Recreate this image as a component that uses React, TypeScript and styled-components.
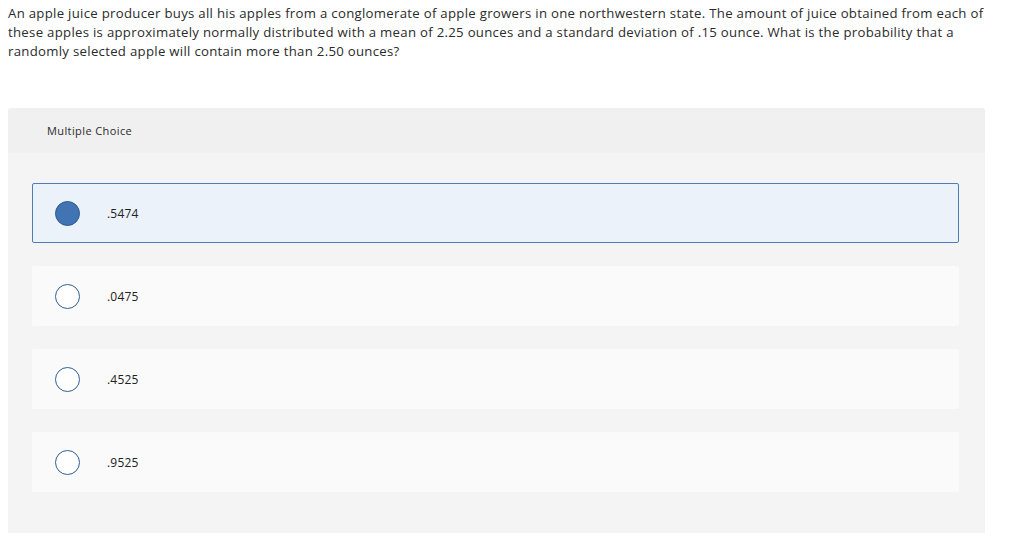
import React from "react";
import styled, { createGlobalStyle } from "styled-components";

const Global = createGlobalStyle`
  html, body { margin: 0; padding: 0; background: #ffffff; }
  body { padding: 3px 8px 8px; font-family: "Open Sans", Arial, sans-serif; color: #333333; }
`;

const Page = styled.main`
  width: 977px;
`;

const Question = styled.p`
  margin: 0;
  font-size: 13.2px;
  letter-spacing: 0.29px;
  line-height: 19px;
  color: #2b2b2b;
  padding-top: 1px;
`;

const Panel = styled.section`
  margin-top: 47px;
  background: #f4f4f4;
  border-radius: 3px 3px 0 0;
  padding-bottom: 41px;
`;

const PanelHeader = styled.div`
  height: 45px;
  display: flex;
  align-items: center;
  padding-left: 39px;
  background: #f0f0f0;
  border-radius: 3px 3px 0 0;
  font-size: 11px;
  letter-spacing: 0.4px;
  color: #2b2b2b;
`;

const Options = styled.div`
  display: flex;
  flex-direction: column;
  gap: 23px;
  padding: 30px 26px 0 24px;
`;

const Option = styled.label<{ $selected?: boolean }>`
  box-sizing: border-box;
  height: 60px;
  display: flex;
  align-items: center;
  padding-left: 22px;
  border-radius: 2px;
  background: ${(p) => (p.$selected ? "#ebf2fa" : "#fafafa")};
  border: 1px solid ${(p) => (p.$selected ? "#4b7dbb" : "#fafafa")};
`;

const Radio = styled.span<{ $selected?: boolean }>`
  box-sizing: border-box;
  width: 25px;
  height: 25px;
  border-radius: 50%;
  flex: none;
  border: 1px solid ${(p) => (p.$selected ? "#2d5a8e" : "#2f5f96")};
  background: ${(p) => (p.$selected ? "#4274b3" : "#ffffff")};
`;

const Value = styled.span`
  margin-left: 27px;
  font-size: 12px;
  letter-spacing: 0.2px;
  color: #222222;
`;

const choices = [".5474", ".0475", ".4525", ".9525"];

export default function App() {
  return (
    <Page>
      <Global />
      <Question>
        An apple juice producer buys all his apples from a conglomerate of apple growers in one northwestern state. The
        amount of juice obtained from each of these apples is approximately normally distributed with a mean of 2.25 ounces
        and a standard deviation of .15 ounce. What is the probability that a randomly selected apple will contain more than
        2.50 ounces?
      </Question>
      <Panel>
        <PanelHeader>Multiple Choice</PanelHeader>
        <Options>
          {choices.map((c, i) => (
            <Option key={c} $selected={i === 0}>
              <Radio $selected={i === 0} />
              <Value>{c}</Value>
            </Option>
          ))}
        </Options>
      </Panel>
    </Page>
  );
}
